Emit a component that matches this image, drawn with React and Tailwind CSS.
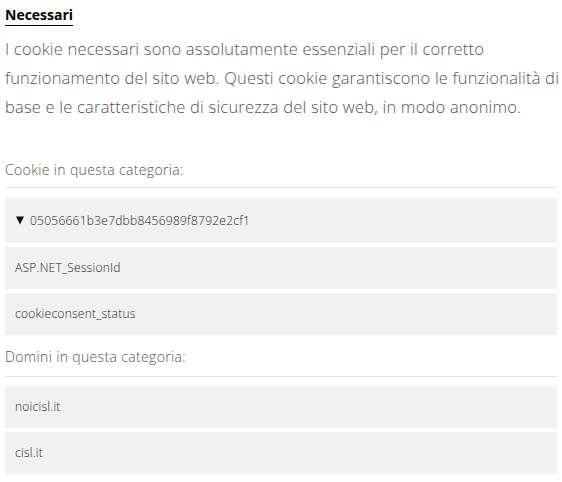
import React from 'react';

const cookies = ['05056661b3e7dbb8456989f8792e2cf1', 'ASP.NET_SessionId', 'cookieconsent_status'];
const domains = ['noicisl.it', 'cisl.it'];

function Item({ children, arrow }) {
  return (
    <div className={`${arrow ? 'h-[45px]' : 'h-[42px]'} mb-[4px] bg-[#f1f1f1] flex items-center px-[10px] text-[12px] tracking-[0.25px] text-[#222] font-light`}>
      {arrow && (
        <svg width="8" height="9" viewBox="0 0 8 9" className="ml-[1px] mr-[6px] shrink-0">
          <path d="M0 0.5 H8 L4 8.5 Z" fill="#111" />
        </svg>
      )}
      {children}
    </div>
  );
}

export default function App() {
  return (
    <div className="bg-white px-[5px] pt-[2px] min-h-[482px]" style={{ fontFamily: '"Open Sans", "Noto Sans", sans-serif' }}>
      <div className="inline-block text-[14px] font-bold text-black leading-[19px] pb-[1px] border-b border-black">Necessari</div>
      <p className="mt-[8px] text-[16.5px] leading-[29px] text-[#555] font-light tracking-[0.2px] whitespace-nowrap">
        I cookie necessari sono assolutamente essenziali per il corretto
        <br />
        funzionamento del sito web. Questi cookie garantiscono le funzionalità di
        <br />
        base e le caratteristiche di sicurezza del sito web, in modo anonimo.
      </p>
      <div className="mt-[39px] text-[14px] tracking-[0.35px] leading-[20px] text-[#555] font-light pb-[7px] border-b border-[#e5e5e5]">Cookie in questa categoria:</div>
      <div className="mt-[10px]">
        {cookies.map((c, i) => (
          <Item key={c} arrow={i === 0}>{c}</Item>
        ))}
      </div>
      <div className="mt-[12px] text-[14px] tracking-[0.35px] leading-[20px] text-[#555] font-light pb-[9px] border-b border-[#e5e5e5]">Domini in questa categoria:</div>
      <div className="mt-[9px]">
        {domains.map((d) => (
          <Item key={d}>{d}</Item>
        ))}
      </div>
    </div>
  );
}
